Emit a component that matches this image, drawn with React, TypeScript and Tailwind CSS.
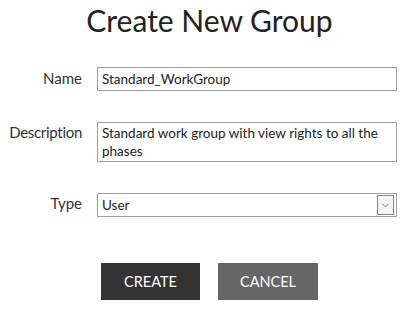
import { ChevronDown } from 'lucide-react'

const font = { fontFamily: 'Lato, "Open Sans", "Liberation Sans", sans-serif' }

export default function App() {
  return (
    <div className="w-[407px] h-[310px] bg-white text-[#333]" style={font}>
      <h1 className="text-center text-[30px] leading-none pt-[5px] pl-[12px] text-[#222]">
        Create New Group
      </h1>

      <div className="flex flex-col mt-[32px]">
        {/* Name */}
        <div className="flex items-center gap-[15px]">
          <label className="w-[82px] text-right text-[15px] -mt-[2px]">Name</label>
          <div className="w-[300px] h-[24px] border border-[#a0a0a0] px-[4px] flex items-center text-[13.5px] text-[#222]">
            Standard_WorkGroup
          </div>
        </div>

        {/* Description */}
        <div className="flex items-start gap-[15px] mt-[31px]">
          <label className="w-[82px] text-right text-[15px] tracking-[-0.3px] mt-[-1px]">Description</label>
          <div className="w-[300px] h-[40px] border border-[#a0a0a0] px-[4px] pt-[1px] text-[13.5px] leading-[18px] text-[#222]">
            Standard work group with view rights to all the phases
          </div>
        </div>

        {/* Type */}
        <div className="flex items-center gap-[15px] mt-[31px]">
          <label className="w-[82px] text-right text-[15px] -mt-[3px]">Type</label>
          <div className="w-[300px] h-[24px] border border-[#a0a0a0] pl-[4px] pr-[2px] flex items-center justify-between text-[13.5px] text-[#222]">
            <span>User</span>
            <span className="w-[17px] h-[20px] border border-[#888] bg-[#f4f4f4] flex items-center justify-center">
              <ChevronDown size={11} strokeWidth={1.5} className="text-[#555]" />
            </span>
          </div>
        </div>
      </div>

      <div className="flex gap-[18px] pl-[101px] mt-[46px]">
        <button className="w-[99px] h-[37px] bg-[#333] text-white text-[14.5px]">CREATE</button>
        <button className="w-[100px] h-[37px] bg-[#666] text-white text-[14.5px]">CANCEL</button>
      </div>
    </div>
  )
}
